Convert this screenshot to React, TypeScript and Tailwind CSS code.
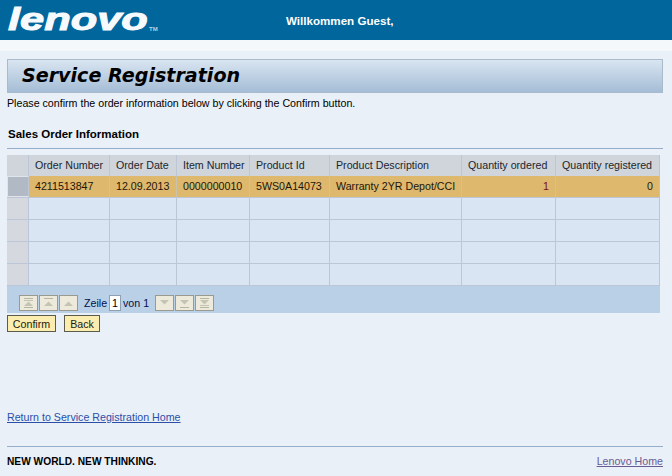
const cols = [
  { w: 'w-[22px]', label: '' },
  { w: 'w-[81px]', label: 'Order Number' },
  { w: 'w-[67px]', label: 'Order Date' },
  { w: 'w-[73px]', label: 'Item Number' },
  { w: 'w-[80px]', label: 'Product Id' },
  { w: 'w-[132px]', label: 'Product Description' },
  { w: 'w-[94px]', label: 'Quantity ordered' },
  { w: 'w-[104px]', label: 'Quantity registered' },
];
const row = ['', '4211513847', '12.09.2013', '0000000010', '5WS0A14073', 'Warranty 2YR Depot/CCI', '1', '0'];

function PagerIcon({ bars, up }: { bars: number; up: boolean }) {
  return (
    <span className="flex h-[16px] w-[19px] items-center justify-center border border-[#9a9a8e] bg-[#eeeadb]">
      <svg width="13" height="12" viewBox="0 0 13 12" className={up ? '' : 'rotate-180'}>
        {bars >= 1 && <rect x="2" y="1" width="9" height="1" fill="#b5b5a3" />}
        {bars >= 2 && <rect x="2" y="3" width="9" height="1" fill="#c4c4b2" />}
        <path d="M6.5 4.5 L11 9 H2 Z" fill="#c4c4b2" />
        {bars >= 2 && <rect x="2" y="10" width="9" height="1" fill="#b5b5a3" />}
      </svg>
    </span>
  );
}

export default function App() {
  return (
    <div className="flex h-[476px] w-[672px] flex-col overflow-hidden bg-[#e9f0f8] font-['Liberation_Sans',Arial,sans-serif] text-[10.67px] text-[#000]">
      <header className="flex h-[40px] shrink-0 bg-[#00669c]">
        <div className="relative w-[286px] shrink-0">
          <span className="absolute left-[8px] top-0 origin-left scale-x-[1.4] text-[31px] font-bold italic leading-[40px] text-[#f7fafc] [-webkit-text-stroke:1px_#f7fafc]">lenovo</span>
          <span className="absolute left-[149px] top-[25px] text-[6px] font-bold leading-[8px] text-[#b9d2e2]">TM</span>
        </div>
        <div className="pt-[14px] text-[11.6px] font-bold leading-[14px] text-[#fff]">Willkommen Guest,</div>
      </header>
      <div className="h-[11px] shrink-0 bg-[#f5f8fa]" />
      <main className="flex flex-1 flex-col px-[7px]">
        <div className="mt-[8px] flex h-[34px] w-[656px] items-center border border-[#a9bacb] bg-gradient-to-b from-[#d9e5f1] to-[#a5bdd6] pl-[14px]">
          <h1 className="font-['DejaVu_Sans',sans-serif] text-[19.1px] font-bold italic leading-[30px]">Service Registration</h1>
        </div>
        <p className="mt-[3px] text-[10.67px] leading-[15px]">Please confirm the order information below by clicking the Confirm button.</p>
        <h2 className="ml-px mt-[16px] text-[11.5px] font-bold leading-[14px]">Sales Order Information</h2>
        <div className="mt-[7px] h-px w-[656px] bg-[#94adca]" />
        <section className="mt-[6px] w-[653px]">
          <div className="flex h-[21px] bg-[#cfd5da] text-[#1c2630]">
            {cols.map((c, i) => (
              <div key={i} className={`${c.w} flex shrink-0 items-center whitespace-nowrap border-r border-[#bcc6d6] pl-[6px] leading-[13px]`}>{c.label}</div>
            ))}
          </div>
          <div className="flex h-[22px] border-b border-[#bcc6d6] bg-[#deb86d] text-[#1e1608]">
            {row.map((v, i) =>
              i === 0 ? (
                <div key={i} className="w-[22px] shrink-0 border border-[#dfe5ea] border-r-[#bcc6d6] bg-[#b0b9c4]" />
              ) : (
                <div key={i} className={`${cols[i].w} flex shrink-0 items-center whitespace-nowrap border-r border-[#c9c3ac] leading-[13px] ${i >= 6 ? 'justify-end pr-[6px]' : 'pl-[6px]'}`}>
                  <span className={i === 6 ? 'text-[#7a1020]' : ''}>{v}</span>
                </div>
              )
            )}
          </div>
          {[0, 1, 2, 3].map((r) => (
            <div key={r} className="flex h-[22px] border-b border-[#bcc6d6] bg-[#d9e5f3]">
              {cols.map((c, i) => (
                <div key={i} className={`${c.w} shrink-0 border-r border-[#bcc6d6] ${i === 0 ? 'bg-[#d5d9df]' : ''}`} />
              ))}
            </div>
          ))}
          <div className="flex h-[27px] items-start gap-[1px] bg-[#b9d0e6] pl-[12px] pt-[9px] leading-[16px] text-[#00104a]">
            <PagerIcon bars={2} up />
            <PagerIcon bars={1} up />
            <PagerIcon bars={0} up />
            <span className="ml-[5px] w-[24px]">Zeile</span>
            <span className="flex h-[16px] w-[12px] items-center justify-center border border-[#8fa0b2] bg-[#fff] text-[#000]">1</span>
            <span className="ml-[1px] w-[31px]">von 1</span>
            <PagerIcon bars={0} up={false} />
            <PagerIcon bars={1} up={false} />
            <PagerIcon bars={2} up={false} />
          </div>
        </section>
        <div className="mt-[2px] flex gap-[8px]">
          <button className="h-[17px] w-[49px] border border-[#5c5c4c] bg-[#fbedb0] leading-[14px] text-[#1c1c10]">Confirm</button>
          <button className="h-[17px] w-[36px] border border-[#5c5c4c] bg-[#fbedb0] leading-[14px] text-[#1c1c10]">Back</button>
        </div>
        <a className="mt-[79px] self-start leading-[13px] text-[#2b4fa8] underline">Return to Service Registration Home</a>
        <div className="mt-[22px] h-px w-[656px] bg-[#94adca]" />
        <div className="mt-[8px] flex w-[656px] items-center justify-between">
          <span className="text-[10.2px] font-bold leading-[13px]">NEW WORLD. NEW THINKING.</span>
          <a className="leading-[13px] text-[#6a5a94] underline">Lenovo Home</a>
        </div>
      </main>
    </div>
  );
}
